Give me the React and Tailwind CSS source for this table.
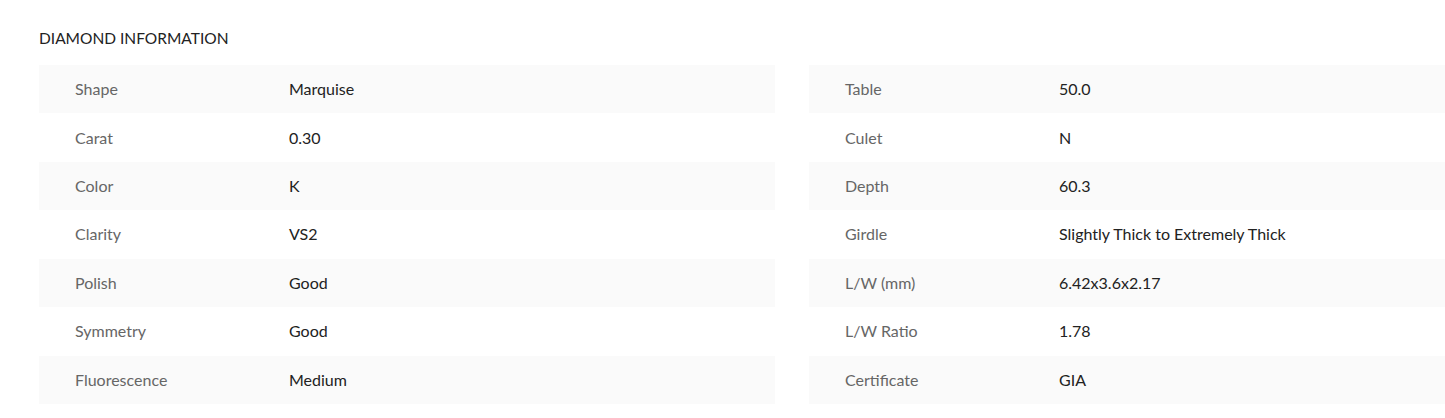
const left = [
  ["Shape", "Marquise"],
  ["Carat", "0.30"],
  ["Color", "K"],
  ["Clarity", "VS2"],
  ["Polish", "Good"],
  ["Symmetry", "Good"],
  ["Fluorescence", "Medium"],
];
const right = [
  ["Table", "50.0"],
  ["Culet", "N"],
  ["Depth", "60.3"],
  ["Girdle", "Slightly Thick to Extremely Thick"],
  ["L/W (mm)", "6.42x3.6x2.17"],
  ["L/W Ratio", "1.78"],
  ["Certificate", "GIA"],
];

function Table({ rows, className }) {
  return (
    <div className={className}>
      {rows.map(([k, v], i) => (
        <div
          key={k}
          className={`flex items-center h-[48.43px] pl-[36px] ${i % 2 === 0 ? "bg-[#fafafa]" : "bg-white"}`}
        >
          <div className="w-[214px] text-[#666666]">{k}</div>
          <div className="text-[#222222]">{v}</div>
        </div>
      ))}
    </div>
  );
}

export default function App() {
  return (
    <div className="bg-white w-[1445px] h-[418px] overflow-hidden pl-[39px] pt-[28px] text-[16px]" style={{ fontFamily: "Lato, 'Open Sans', sans-serif" }}>
      <div className="text-[15.5px] text-[#222222] leading-[20px] mb-[17px]">DIAMOND INFORMATION</div>
      <div className="flex gap-[34px]">
        <Table rows={left} className="w-[736px] shrink-0" />
        <Table rows={right} className="flex-1" />
      </div>
    </div>
  );
}
